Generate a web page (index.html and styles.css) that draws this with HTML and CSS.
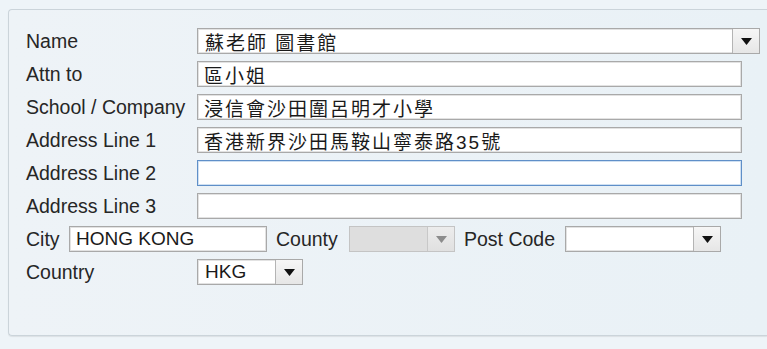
FILE: index.html
```html
<!DOCTYPE html>
<html lang="zh-Hant">
<head>
    <meta charset="UTF-8">
    <meta name="viewport" content="width=device-width, initial-scale=1.0">
    <title>Address</title>
    <link rel="stylesheet" href="styles.css">
</head>
<body>

    <!-- address panel -->
    <div class="panel">
        <div class="form">
            <label class="label">Name</label>
            <div class="combo wide">
                <input class="combo-text cjk" type="text" value="蘇老師 圖書館">
                <span class="combo-btn"><svg width="11" height="7" viewBox="0 0 11 7"><polygon points="0,0 11,0 5.5,7"/></svg></span>
            </div>

            <label class="label">Attn to</label>
            <input class="field cjk" type="text" value="區小姐">

            <label class="label">School / Company</label>
            <input class="field cjk" type="text" value="浸信會沙田圍呂明才小學">

            <label class="label">Address Line 1</label>
            <input class="field cjk" type="text" value="香港新界沙田馬鞍山寧泰路35號">

            <label class="label">Address Line 2</label>
            <input class="field focus" type="text" value="">

            <label class="label">Address Line 3</label>
            <input class="field" type="text" value="">

            <div class="city-row">
                <label class="label city-label">City</label>
                <input class="field city" type="text" value="HONG KONG">
                <label class="label county-label">County</label>
                <div class="combo county disabled">
                    <input class="combo-text" type="text" value="" disabled>
                    <span class="combo-btn"><svg width="11" height="7" viewBox="0 0 11 7"><polygon points="0,0 11,0 5.5,7"/></svg></span>
                </div>
                <label class="label post-label">Post Code</label>
                <div class="combo post">
                    <input class="combo-text" type="text" value="">
                    <span class="combo-btn"><svg width="11" height="7" viewBox="0 0 11 7"><polygon points="0,0 11,0 5.5,7"/></svg></span>
                </div>
            </div>

            <label class="label">Country</label>
            <div class="combo country">
                <input class="combo-text" type="text" value="HKG">
                <span class="combo-btn"><svg width="11" height="7" viewBox="0 0 11 7"><polygon points="0,0 11,0 5.5,7"/></svg></span>
            </div>
        </div>
    </div>

</body>
</html>
```

FILE: styles.css
```css
body {
    margin: 0;
    height: 349px;
    overflow: hidden;
    background-color: #eef4f8;
    font-family: 'Liberation Sans', 'Noto Sans CJK TC', sans-serif;
    font-size: 19.5px;
    color: #262626;
}
.panel {
    margin: 9px 0 0 8px;
    height: 327px;
    box-sizing: border-box;
    padding: 18px 0 0 17px;
    border: 1px solid #cbd4da;
    border-right: none;
    border-radius: 4px 0 0 4px;
    background: linear-gradient(90deg, #eef3f7, #e9f1f6);
    box-shadow: 0 1px 1px rgba(0, 0, 0, 0.08);
}
.form {
    display: grid;
    grid-template-columns: 171px auto;
    grid-auto-rows: 26px;
    row-gap: 7px;
    justify-items: start;
    align-items: center;
}
.label {
    white-space: nowrap;
    line-height: 26px;
}
.field, .combo-text {
    font-family: 'Liberation Sans', 'Noto Sans CJK TC', sans-serif;
    font-size: 19px;
    color: #1a1a1a;
    margin: 0;
    outline: none;
}
.field {
    width: 545px;
    height: 26px;
    box-sizing: border-box;
    padding: 0 6px;
    border: 1px solid #a9a9a9;
    box-shadow: inset 0 0 0 1px #e2e2e2;
    background-color: #fff;
}
.cjk {
    letter-spacing: 2px;
}
.field.focus {
    border-color: #5f8fc8;
    box-shadow: inset 0 0 0 1px #cfe0f2;
}
.combo {
    display: flex;
    height: 26px;
    box-sizing: border-box;
    border: 1px solid #a9a9a9;
    box-shadow: inset 0 0 0 1px #e2e2e2;
    background-color: #fff;
}
.combo-text {
    flex: 1;
    min-width: 0;
    border: none;
    padding: 0 0 0 7px;
    background: transparent;
}
.combo-btn {
    width: 26px;
    display: flex;
    justify-content: center;
    align-items: center;
    border-left: 1px solid #b4b4b4;
    background: linear-gradient(#f6f6f6, #e6e6e6);
}
.combo-btn svg {
    fill: #111;
}
.combo.wide {
    width: 563px;
}
.combo.country {
    width: 106px;
}
.combo.county {
    width: 106px;
}
.combo.post {
    width: 156px;
}
.combo.disabled {
    border-color: #c4c4c4;
    background-color: #dedede;
    box-shadow: none;
}
.combo.disabled .combo-btn {
    border-left-color: #c8c8c8;
    background: linear-gradient(#ececec, #e0e0e0);
}
.combo.disabled .combo-btn svg {
    fill: #8c8c8c;
}
.city-row {
    grid-column: 1 / -1;
    display: flex;
    align-items: center;
}
.city-label {
    width: 43px;
}
.field.city {
    width: 198px;
    margin-right: 9px;
}
.county-label {
    width: 73px;
}
.combo.county {
    margin-right: 9px;
}
.post-label {
    width: 101px;
}
```
